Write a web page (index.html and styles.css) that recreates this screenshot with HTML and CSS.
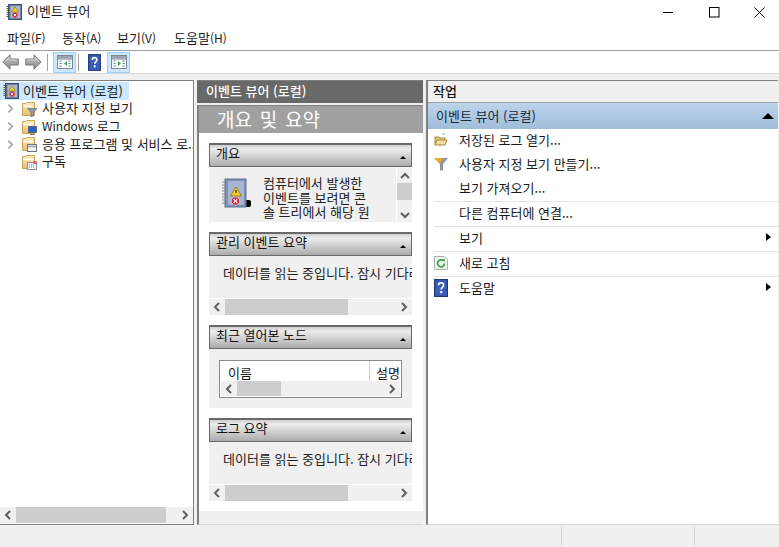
FILE: index.html
```html
<!DOCTYPE html>
<html lang="ko">
<head>
<meta charset="utf-8">
<title>이벤트 뷰어</title>
<link rel="stylesheet" href="styles.css">
</head>
<body>
<svg class="defs" xmlns="http://www.w3.org/2000/svg">
  <defs>
    <linearGradient id="folderGrad" x1="0" y1="0" x2="0" y2="1"><stop offset="0" stop-color="#fdf0c0"/><stop offset="1" stop-color="#e3bd6c"/></linearGradient>
    <linearGradient id="navGrad" x1="0" y1="0" x2="0" y2="1"><stop offset="0" stop-color="#c4c4c4"/><stop offset="1" stop-color="#8c8c8c"/></linearGradient>
  </defs>
  <symbol id="book" viewBox="0 0 16 16">
    <rect x="2.500" y=".5" width="13" height="15" fill="#6f7f9f" stroke="#3f4f70" stroke-width="1"/>
    <rect x="4.500" y="2" width="9.500" height="12" fill="#a9b9d4"/>
    <path d="M.5 2.500h3.500M.5 4.500h3.500M.5 6.500h3.500M.5 8.500h3.500M.5 10.500h3.500M.5 12.500h3.500" stroke="#555" stroke-width="1"/>
    <path d="M9 2.500l3.300 5.500H5.700z" fill="#f5cb2c" stroke="#9a7a10" stroke-width=".6"/>
    <circle cx="9" cy="11" r="2.800" fill="#d5343f"/>
    <path d="M7.800 9.800l2.400 2.400M10.200 9.800l-2.400 2.400" stroke="#fff" stroke-width=".9"/>
  </symbol>
  <symbol id="chev" viewBox="0 0 8 12">
    <path d="M1.500 1.500l4.500 4.500-4.500 4.500" fill="none" stroke="#a8a8a8" stroke-width="2"/>
  </symbol>
  <symbol id="folder" viewBox="0 0 16 16">
    <path d="M1.500 14.500v-12h3l1-1h8v13z" fill="url(#folderGrad)" stroke="#c7a45a" stroke-width="1"/>
    <path d="M2.500 5.500h10" stroke="#fff" stroke-width="1.500"/>
  </symbol>
  <symbol id="help" viewBox="0 0 14 18">
    <rect x=".5" y=".5" width="13" height="17" fill="#2f4ea5" stroke="#20376f"/>
    <rect x="1.500" y="1.500" width="11" height="15" fill="#3a5cbc"/>
    <path d="M4.600 6.200c0-3.200 5-3.200 5-.2 0 2-2.400 2.200-2.400 4.600" fill="none" stroke="#fff" stroke-width="1.700"/>
    <rect x="6.200" y="12" width="2" height="2.200" fill="#fff"/>
  </symbol>
  <symbol id="pane" viewBox="0 0 16 14">
    <rect x=".5" y=".5" width="15" height="13" fill="#fff" stroke="#7a8794"/>
    <rect x="1" y="1" width="14" height="2.500" fill="#9aa5b1"/>
    <path d="M1 4h14" stroke="#7a8794"/>
    <path d="M2.500 6h2M2.500 8.500h2M2.500 11h2M11.500 6h2M11.500 8.500h2M11.500 11h2" stroke="#4f84c4" stroke-width="1.200"/>
  </symbol>
  <symbol id="nav" viewBox="0 0 17 16">
    <path d="M.8 8l7.200-7.200v4.200h8.200v6H8v4.200z" fill="url(#navGrad)" stroke="#757575" stroke-width="1"/>
    <path d="M2.800 8l4.200-4.200v2.200h8" fill="none" stroke="#d4d4d4" stroke-width="1"/>
  </symbol>
</svg>
<div class="app">
  <header class="titlebar">
    <div class="title-left">
      <svg class="ic16"><use href="#book"/></svg>
      <span class="title-text">이벤트 뷰어</span>
    </div>
    <div class="winbtns">
      <svg class="winbtn" viewBox="0 0 11 11"><path d="M0 5.500h10" stroke="#000" fill="none"/></svg>
      <svg class="winbtn" viewBox="0 0 11 11"><rect x=".5" y=".5" width="9.500" height="9.500" stroke="#000" fill="none"/></svg>
      <svg class="winbtn" viewBox="0 0 11 11"><path d="M.5 .5l10 10M10.500 .5l-10 10" stroke="#000" fill="none"/></svg>
    </div>
  </header>
  <nav class="menubar">
    <span class="menu m1">파일<span class="lat">(F)</span></span>
    <span class="menu m2">동작<span class="lat">(A)</span></span>
    <span class="menu m3">보기<span class="lat">(V)</span></span>
    <span class="menu m4">도움말<span class="lat">(H)</span></span>
  </nav>
  <div class="toolbar">
    <svg class="navic"><use href="#nav"/></svg>
    <svg class="navic flip"><use href="#nav"/></svg>
    <i class="tsep"></i>
    <span class="tbtn"><svg class="paneic" viewBox="0 0 16 14"><use href="#pane"/><path d="M10 6v5L7 8.500z" fill="#3fae49"/></svg></span>
    <i class="tsep s2"></i>
    <svg class="helpic tool-help"><use href="#help"/></svg>
    <span class="tbtn b2"><svg class="paneic" viewBox="0 0 16 14"><use href="#pane"/><path d="M7 6v5l3-2.500z" fill="#3fae49"/></svg></span>
  </div>
  <main class="main">
    <section class="tree">
      <div class="tree-body">
        <div class="root-row"><svg class="ic16"><use href="#book"/></svg><span class="nudge">이벤트 뷰어 (로컬)</span></div>
        <div class="tree-row">
          <svg class="chev"><use href="#chev"/></svg>
          <svg class="folder" viewBox="0 0 16 16"><use href="#folder"/><path d="M6.500 7.500h9.500l-3.500 4v3.500l-2.500 1v-4.500z" fill="#8d9aa5" stroke="#566570" stroke-width=".6"/></svg>
          <span class="nudge">사용자 지정 보기</span>
        </div>
        <div class="tree-row">
          <svg class="chev"><use href="#chev"/></svg>
          <svg class="folder" viewBox="0 0 16 16"><use href="#folder"/><rect x="7.500" y="7.500" width="8" height="6" fill="#2a5fd0" stroke="#5a6a80"/><path d="M9 15.500h5" stroke="#6b7785"/></svg>
          <span class="nudge"><span class="lat">Windows</span> 로그</span>
        </div>
        <div class="tree-row">
          <svg class="chev"><use href="#chev"/></svg>
          <svg class="folder" viewBox="0 0 16 16"><use href="#folder"/><rect x="6.500" y="8.500" width="9" height="7" fill="#f2f4f6" stroke="#6d7680"/><path d="M7 10.500h8" stroke="#9aa5b1" stroke-width="1.500"/></svg>
          <span class="clip nudge">응용 프로그램 및 서비스 로...</span>
        </div>
        <div class="tree-row">
          <i class="chev-space"></i>
          <svg class="folder" viewBox="0 0 16 16"><use href="#folder"/><rect x="6.500" y="8.500" width="9" height="7" fill="#f6f8fb" stroke="#8a94a0"/><path d="M8 11h1M10 11h1M12 11h1M8 13h1M10 13h1M12 13h1" stroke="#4f84c4"/><rect x="12.500" y="7" width="3" height="3" fill="#e0525c"/></svg>
          <span class="nudge">구독</span>
        </div>
      </div>
      <div class="hscroll tree-scroll">
        <svg class="sarrow" viewBox="0 0 8 12"><path d="M6 2L2 6l4 4" fill="none" stroke="#606060" stroke-width="2"/></svg>
        <div class="strack"><i class="sthumb tree-thumb"></i></div>
        <svg class="sarrow" viewBox="0 0 8 12"><path d="M2 2l4 4-4 4" fill="none" stroke="#606060" stroke-width="2"/></svg>
      </div>
    </section>

    <section class="center">
      <div class="center-head">이벤트 뷰어 (로컬)</div>
      <div class="center-panel">
        <div class="big-head">개요 및 요약</div>
        <div class="center-body">
          <div class="sec sec1">
            <div class="sec-head"><span>개요</span><i class="up"></i></div>
            <div class="ov">
              <svg class="ov-ic" viewBox="0 0 30 32">
                <rect x="24" y="22" width="6" height="7" rx="2" fill="#000"/>
                <rect x="4" y="1" width="21" height="28" fill="#7d90b5" stroke="#5f6f92"/>
                <rect x="7" y="3" width="16" height="24" fill="#a5b5d2"/>
                <path d="M1 4h4M1 7h4M1 10h4M1 13h4M1 16h4M1 19h4M1 22h4M1 25h4" stroke="#888" stroke-width="1"/>
                <path d="M15 9l5.500 9h-11z" fill="#f5cb2c" stroke="#8a7010" stroke-width=".8"/>
                <path d="M15 12v3" stroke="#333" stroke-width="1.200"/>
                <circle cx="14.500" cy="23" r="4.200" fill="#cf2f3f" stroke="#fff" stroke-width=".5"/>
                <path d="M12.700 21.200l3.600 3.600M16.300 21.200l-3.600 3.600" stroke="#fff" stroke-width="1.200"/>
              </svg>
              <p class="ov-text">컴퓨터에서 발생한<br>이벤트를 보려면 콘<br>솔 트리에서 해당 원</p>
              <div class="vscroll">
                <svg class="varrow" viewBox="0 0 12 8"><path d="M2 6l4-4 4 4" fill="none" stroke="#606060" stroke-width="2"/></svg>
                <div class="vtrack"><i class="vthumb"></i></div>
                <svg class="varrow" viewBox="0 0 12 8"><path d="M2 2l4 4 4-4" fill="none" stroke="#606060" stroke-width="2"/></svg>
              </div>
            </div>
          </div>

          <div class="sec sec2">
            <div class="sec-head"><span>관리 이벤트 요약</span><i class="up"></i></div>
            <div class="load">데이터를 읽는 중입니다. 잠시 기다려 주십시오.</div>
            <div class="hscroll sec-scroll">
              <svg class="sarrow" viewBox="0 0 8 12"><path d="M6 2L2 6l4 4" fill="none" stroke="#606060" stroke-width="2"/></svg>
              <div class="strack"><i class="sthumb sec-thumb"></i></div>
              <svg class="sarrow" viewBox="0 0 8 12"><path d="M2 2l4 4-4 4" fill="none" stroke="#606060" stroke-width="2"/></svg>
            </div>
          </div>

          <div class="sec sec3">
            <div class="sec-head"><span>최근 열어본 노드</span><i class="up"></i></div>
            <div class="recent">
              <div class="grid">
                <div class="grid-head"><span class="col-name">이름</span><span class="col-desc">설명</span></div>
                <div class="hscroll grid-scroll">
                  <svg class="sarrow" viewBox="0 0 8 12"><path d="M6 2L2 6l4 4" fill="none" stroke="#606060" stroke-width="2"/></svg>
                  <div class="strack"><i class="sthumb grid-thumb"></i></div>
                  <svg class="sarrow" viewBox="0 0 8 12"><path d="M2 2l4 4-4 4" fill="none" stroke="#606060" stroke-width="2"/></svg>
                </div>
              </div>
            </div>
          </div>

          <div class="sec sec4">
            <div class="sec-head"><span>로그 요약</span><i class="up"></i></div>
            <div class="load">데이터를 읽는 중입니다. 잠시 기다려 주십시오.</div>
            <div class="hscroll sec-scroll">
              <svg class="sarrow" viewBox="0 0 8 12"><path d="M6 2L2 6l4 4" fill="none" stroke="#606060" stroke-width="2"/></svg>
              <div class="strack"><i class="sthumb sec-thumb"></i></div>
              <svg class="sarrow" viewBox="0 0 8 12"><path d="M2 2l4 4-4 4" fill="none" stroke="#606060" stroke-width="2"/></svg>
            </div>
          </div>
        </div>
        <div class="center-foot"></div>
      </div>
    </section>

    <section class="actions">
      <div class="act-head">작업</div>
      <div class="act-group"><span class="nudge">이벤트 뷰어 (로컬)</span><i class="up big"></i></div>
      <ul class="act-list">
        <li class="act short"><svg class="act-ic" viewBox="0 0 14 14"><path d="M1 12V4h4l1 1h5v2" fill="#e8c878" stroke="#a98a45"/><path d="M1 12l2-5h10l-2 5z" fill="#f3dc9f" stroke="#a98a45"/><path d="M8 1h3" stroke="#7cc47c"/></svg><span>저장된 로그 열기...</span></li>
        <li class="act short"><svg class="act-ic" viewBox="0 0 14 14"><path d="M0 1h14L9 7v6.500H6V7z" fill="#8b98a3"/><path d="M.5 1h8L6 7z" fill="#f6a91b"/></svg><span>사용자 지정 보기 만들기...</span></li>
        <li class="act short"><i class="act-ic"></i><span>보기 가져오기...</span></li>
        <li class="act sep"><i class="act-ic"></i><span>다른 컴퓨터에 연결...</span></li>
        <li class="act sep"><i class="act-ic"></i><span>보기</span><i class="right"></i></li>
        <li class="act sep"><svg class="act-ic" viewBox="0 0 14 14"><path d="M.5 .5h10l3 3v10H.5z" fill="#f4f6f4" stroke="#a9b2a9"/><path d="M10.500 7.500a3.500 3.500 0 1 1-1.200-2.800" fill="none" stroke="#3ca648" stroke-width="1.800"/><path d="M8 3l3 .3-.5 3z" fill="#3ca648"/></svg><span>새로 고침</span></li>
        <li class="act sep"><svg class="act-ic act-help" viewBox="0 0 14 18"><use href="#help"/></svg><span>도움말</span><i class="right"></i></li>
      </ul>
    </section>
  </main>
  <footer class="statusbar">
    <i class="st st1"></i>
    <i class="st st2"></i>
  </footer>
</div>
</body>
</html>
```

FILE: styles.css
```css
* { box-sizing: border-box; }
html, body { margin: 0; padding: 0; }
body {
  width: 779px; height: 547px; overflow: hidden;
  font-family: "Noto Sans CJK KR", "Liberation Sans", sans-serif;
  font-size: 13px; color: #1a1a1a; background: #f0f0f0;
}
.lat { font-size: 12px; }
.nudge { margin-top: -2px; }
.defs { display: block; width: 0; height: 0; }
.app { width: 779px; height: 547px; display: flex; flex-direction: column; }

.titlebar { height: 26px; background: #fff; display: flex; justify-content: space-between; }
.title-left { display: flex; align-items: center; padding: 0 0 2px 6px; gap: 5px; }
.title-text { line-height: 20px; margin-top: -2px; }
.ic16 { width: 16px; height: 16px; flex: none; }
.winbtns { display: flex; gap: 34.500px; padding: 7px 14px 0 0; }
.winbtn { width: 11px; height: 11px; }

.menubar { height: 25px; background: #fff; border-bottom: 1px solid #a0a0a0; display: flex; align-items: center; padding-left: 7px; }
.menu { line-height: 22px; }
.m1 { width: 55px; } .m2 { width: 55px; } .m3 { width: 57px; }

.toolbar { height: 23px; background: #fff; border-bottom: 1px solid #d8d8d8; display: flex; align-items: center; padding-left: 2px; }
.navic { width: 17px; height: 16px; margin-right: 6px; flex: none; }
.navic.flip { transform: scaleX(-1); margin-right: 5px; }
.tsep { width: 1px; height: 17px; background: #a0a0a0; margin-right: 5px; flex: none; }
.tsep.s2 { margin: 0 9px 0 2px; }
.tbtn { width: 23px; height: 21px; background: #cce8ff; border: 1px solid #99d1ff; display: flex; align-items: center; justify-content: center; flex: none; }
.tbtn.b2 { margin-left: 6px; }
.paneic { width: 16px; height: 14px; }
.helpic { width: 13px; height: 17px; }
.tool-help { flex: none; }

.main { height: 445px; margin-top: 6px; display: flex; flex: none; }

.tree { width: 194px; background: #fff; border-top: 1px solid #808080; border-right: 1px solid #808080; border-bottom: 1px solid #808080; display: flex; flex-direction: column; }
.tree-body { flex: 1; min-height: 0; padding-top: 1px; }
.root-row { width: 129px; height: 18px; background: #cce8ff; display: flex; align-items: center; gap: 4px; padding-left: 3px; }
.tree-row { height: 17.700px; display: flex; align-items: center; padding-left: 7px; white-space: nowrap; overflow: hidden; }
.chev { width: 7px; height: 11px; flex: none; margin-right: 7px; }
.chev-space { width: 14px; flex: none; }
.folder { width: 16px; height: 16px; flex: none; margin-right: 5px; }
.clip { overflow: hidden; flex: 1; min-width: 0; }

.hscroll { height: 16px; display: flex; align-items: center; background: #f0f0f0; flex: none; }
.sarrow { width: 16px; height: 12px; flex: none; }
.strack { flex: 1; height: 100%; min-width: 0; }
.sthumb { display: block; height: 100%; background: #cdcdcd; }
.tree-scroll { margin-bottom: 1px; }
.tree-thumb { width: 150px; }

.center { width: 229px; margin-left: 3px; display: flex; flex-direction: column; }
.center-head { width: 226px; height: 23px; background: #696969; color: #fff; font-weight: 500; padding-left: 9px; line-height: 19px; border-top: 1px solid #808080; flex: none; }
.center-panel { flex: 1; width: 226px; min-height: 0; margin-top: 2px; border-top: 1px solid #808080; border-left: 2px solid #808080; display: flex; flex-direction: column; background: #fff; border-bottom: 1px solid #d8d8d8; }
.big-head { height: 27px; background: #a0a0a0; color: #fff; font-size: 19px; line-height: 25px; padding-left: 18px; word-spacing: 2.500px; flex: none; }
.center-body { flex: 1; min-height: 0; padding: 10px 11px 0 10px; }
.center-foot { height: 13px; background: #f0f0f0; flex: none; }

.sec { margin-bottom: 10px; }
.sec-head { height: 24px; border: 1px solid #696969; border-width: 2px 1px 1px 1px; background: linear-gradient(#d0d0d0, #ececec 20%, #acacac); display: flex; justify-content: space-between; align-items: center; padding: 0 5px 0 6px; color: #111; }
.sec-head span { line-height: 16px; margin-top: -6px; }
.up { width: 0; height: 0; border-left: 3px solid transparent; border-right: 3px solid transparent; border-bottom: 3px solid #000; margin-top: 4px; }
.up.big { border-left-width: 6px; border-right-width: 6px; border-bottom-width: 6px; margin-top: 0; }

.ov { height: 55px; background: #f0f0f0; display: flex; overflow: hidden; }
.ov-ic { width: 30px; height: 32px; flex: none; margin: 11px 12px 0 12px; }
.ov-text { margin: 9px 0 0 0; flex: 1; line-height: 14.500px; white-space: nowrap; color: #222; min-width: 0; overflow: hidden; }
.vscroll { width: 16px; background: #f0f0f0; border-left: 1px solid #fff; display: flex; flex-direction: column; align-items: center; flex: none; }
.varrow { width: 12px; height: 8px; margin: 5px 0 3px; flex: none; }
.vtrack { flex: 1; width: 100%; }
.vthumb { display: block; height: 17px; background: #cdcdcd; }

.load { height: 42px; background: #f0f0f0; padding: 8px 0 0 14px; line-height: 17px; white-space: nowrap; overflow: hidden; color: #222; }
.sec-scroll { margin-top: 1px; }
.sec-thumb { width: 123px; }

.recent { height: 59px; background: #f0f0f0; padding: 11px 10px 0 10px; }
.grid { height: 38px; background: #fff; border: 1px solid #8a8a8a; padding: 0 1px; }
.grid-head { height: 20px; display: flex; overflow: hidden; white-space: nowrap; }
.col-name { width: 149px; padding-left: 7px; line-height: 24px; border-right: 1px solid #d0d0d0; flex: none; }
.col-desc { padding-left: 6px; line-height: 24px; }
.grid-scroll { height: 15px; }
.grid-thumb { width: 44px; }

.actions { width: 352px; background: #fff; border-left: 2px solid #808080; border-top: 1px solid #808080; display: flex; flex-direction: column; border-bottom: 1px solid #d8d8d8; }
.act-head { height: 22px; background: #f0f0f0; border-bottom: 1px solid #a0a0a0; padding-left: 5px; line-height: 20px; color: #111; font-weight: 500; flex: none; }
.act-group { height: 26px; background: linear-gradient(#bdd4ea, #9fbcd9); display: flex; justify-content: space-between; align-items: center; padding: 0 4px 0 8px; color: #1a2a3a; flex: none; }
.act-list { list-style: none; margin: 0; padding: 0; }
.act { height: 25px; display: flex; align-items: center; position: relative; padding: 0 0 3px 6px; }
.act.short { height: 24px; }
.act.sep { margin-left: 6px; padding-left: 0; border-top: 1px solid #e4e4e4; }
.act-ic { width: 14px; height: 14px; flex: none; margin-right: 11px; display: block; }
.act-help { height: 18px; }
.right { position: absolute; right: 7px; top: 6px; width: 0; height: 0; border-top: 4px solid transparent; border-bottom: 4px solid transparent; border-left: 5px solid #000; }

.statusbar { height: 21px; background: #f0f0f0; margin-top: auto; padding-top: 1px; display: flex; }
.st { width: 1px; height: 19px; background: #d4d4d4; }
.st1 { margin-left: 561px; }
.st2 { margin-left: 132px; }
```
